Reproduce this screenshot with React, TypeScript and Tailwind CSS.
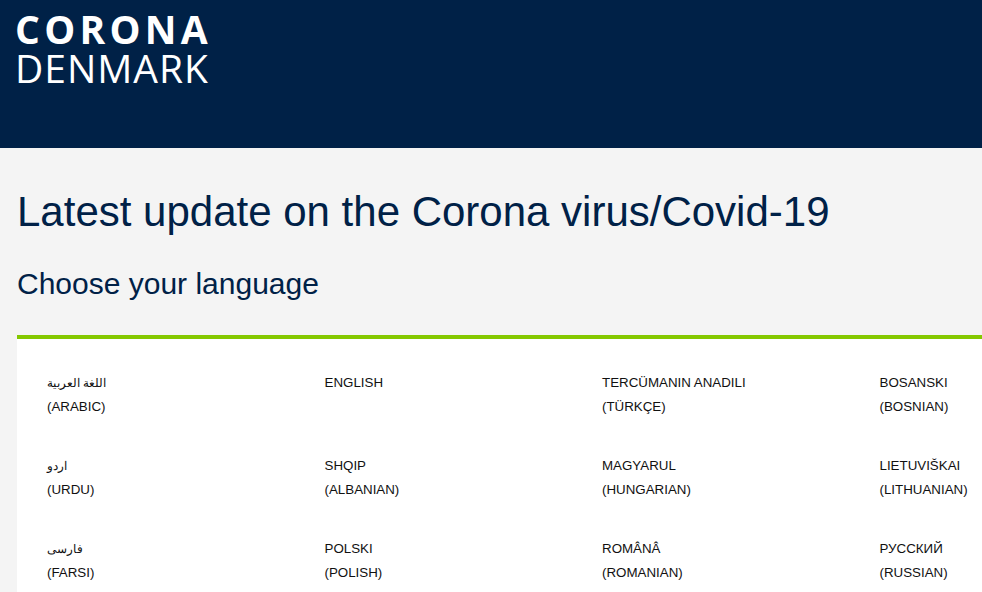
const languages = [
  { native: "اللغة العربية", name: "(ARABIC)", rtl: true },
  { native: "ENGLISH", name: "" },
  { native: "TERCÜMANIN ANADILI", name: "(TÜRKÇE)" },
  { native: "BOSANSKI", name: "(BOSNIAN)" },
  { native: "اردو", name: "(URDU)", rtl: true },
  { native: "SHQIP", name: "(ALBANIAN)" },
  { native: "MAGYARUL", name: "(HUNGARIAN)" },
  { native: "LIETUVIŠKAI", name: "(LITHUANIAN)" },
  { native: "فارسی", name: "(FARSI)", rtl: true },
  { native: "POLSKI", name: "(POLISH)" },
  { native: "ROMÂNÂ", name: "(ROMANIAN)" },
  { native: "РУССКИЙ", name: "(RUSSIAN)" },
];

const App = () => {
  return (
    <div className="min-h-screen overflow-hidden bg-[#f4f4f4] font-['Liberation_Sans',Arial,sans-serif]">
      <header className="h-[148px] bg-[#002147] px-[15px] pt-[8px] font-['Open_Sans',sans-serif] text-white">
        <div className="text-[39px] font-bold leading-[42px] tracking-[0.11em]">CORONA</div>
        <div className="-mt-[3px] text-[39px] font-normal leading-[42px] tracking-[0.025em]">DENMARK</div>
      </header>

      <main className="pl-[17px]">
        <h1 className="pt-[34px] text-[42px] leading-[60px] text-[#002147]">
          Latest update on the Corona virus/Covid-19
        </h1>
        <h2 className="mt-[22px] text-[30px] leading-[40px] text-[#002147]">Choose your language</h2>

        <section className="mt-[31px] w-[1000px] border-t-4 border-[#84c800] bg-white px-[30px] pt-[32px] pb-[10px]">
          <ul className="grid grid-cols-[repeat(4,277.5px)] gap-y-[35px]">
            {languages.map((lang) => (
              <li key={lang.name + lang.native} className="text-[13.33px] leading-[24px] text-[#111]">
                <div className={lang.rtl ? "text-[11.5px]" : ""}>
                  <span dir={lang.rtl ? "rtl" : undefined}>{lang.native}</span>
                </div>
                <div className="h-[24px]">{lang.name}</div>
              </li>
            ))}
          </ul>
        </section>
      </main>
    </div>
  );
};

export default App;
